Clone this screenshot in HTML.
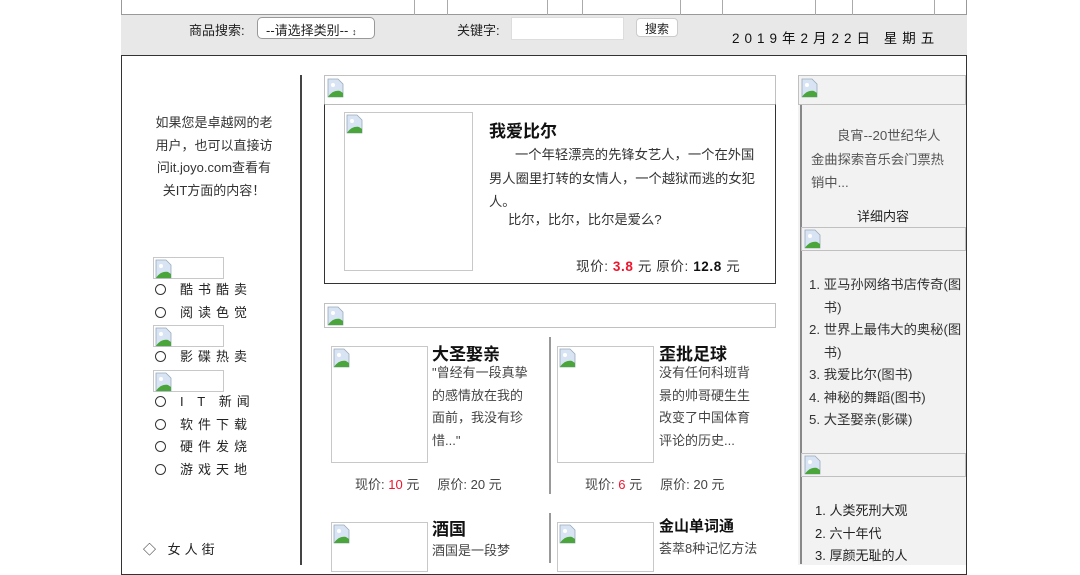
<!DOCTYPE html>
<html><head><meta charset="utf-8"><style>
*{margin:0;padding:0;box-sizing:border-box}
body{width:1080px;height:558px;overflow:hidden;background:#fff;font-family:"Liberation Sans","Noto Sans CJK SC",sans-serif;color:#333;font-size:13px;position:relative}
.a{position:absolute}
.img{position:absolute;border:1px solid #c8c8c8;background:#fff}
.img svg{position:absolute;left:1px;top:1px}
.bar{position:absolute;border:1px solid #c0c0c0;background:#fff}
.t{position:absolute;white-space:nowrap}
.red{color:#f0142d}
.rb{display:inline-block;width:11px;height:11px;border:1px solid #333;border-radius:50%;margin-right:14px;vertical-align:-1px}
</style></head><body>
<svg width="0" height="0" style="position:absolute"><defs><g id="bi"><path d="M1 1h10l5 5v13H1z" fill="#d8e4f4" stroke="#9ab" stroke-width=".8"/><path d="M1 19c3-5 8-7 12-6l3 2v4z" fill="#4aa53a"/><circle cx="6" cy="7" r="2" fill="#fff"/></g></defs></svg>

<div class="a" style="left:121px;top:0;width:846px;height:15px;border:1px solid #999;border-top:none;background:#fff"></div>
<div class="a" style="left:414px;top:0;width:1px;height:15px;background:#aaa"></div>
<div class="a" style="left:447px;top:0;width:1px;height:15px;background:#aaa"></div>
<div class="a" style="left:547px;top:0;width:1px;height:15px;background:#aaa"></div>
<div class="a" style="left:582px;top:0;width:1px;height:15px;background:#aaa"></div>
<div class="a" style="left:680px;top:0;width:1px;height:15px;background:#aaa"></div>
<div class="a" style="left:722px;top:0;width:1px;height:15px;background:#aaa"></div>
<div class="a" style="left:815px;top:0;width:1px;height:15px;background:#aaa"></div>
<div class="a" style="left:852px;top:0;width:1px;height:15px;background:#aaa"></div>
<div class="a" style="left:934px;top:0;width:1px;height:15px;background:#aaa"></div>
<div class="a" style="left:121px;top:15px;width:846px;height:40px;background:#e8e8e8"></div>
<div class="t" style="left:189px;top:20px;color:#222">商品搜索:</div>
<div class="a" style="left:257px;top:17px;width:118px;height:22px;border:1px solid #999;border-radius:5px;background:#fff;font-size:13px;padding:2px 0 0 8px;color:#222">--请选择类别-- <span style="font-size:9px">&#8597;</span></div>
<div class="t" style="left:457px;top:20px;color:#222">关键字:</div>
<div class="a" style="left:511px;top:17px;width:113px;height:23px;background:#fff;border:1px solid #ddd"></div>
<div class="a" style="left:636px;top:18px;width:42px;height:19px;background:#fff;border:1px solid #ccc;border-radius:4px;font-size:12px;text-align:center;padding-top:1px;color:#222">搜索</div>
<div class="t" style="left:732px;top:27px;color:#111;letter-spacing:5px;font-size:13.5px">2019年2月22日 星期五</div>

<div class="a" style="left:121px;top:55px;width:846px;height:520px;border:1px solid #333"></div>
<div class="a" style="left:300px;top:75px;width:2px;height:490px;background:#444"></div>

<div class="a" style="left:152px;top:112px;width:124px;font-size:13px;line-height:22.5px;text-align:center;color:#333">如果您是卓越网的老用户，也可以直接访问it.joyo.com查看有关IT方面的内容！</div>
<div class="img" style="left:153px;top:257px;width:71px;height:22px"><svg width="18" height="20"><use href="#bi"/></svg></div>
<div class="img" style="left:153px;top:325px;width:71px;height:22px"><svg width="18" height="20"><use href="#bi"/></svg></div>
<div class="img" style="left:153px;top:370px;width:71px;height:22px"><svg width="18" height="20"><use href="#bi"/></svg></div>
<div class="t" style="left:155px;top:279px;line-height:22.5px;color:#222;font-size:13px;letter-spacing:5px"><span class="rb"></span>酷书酷卖<br><span class="rb"></span>阅读色觉</div>
<div class="t" style="left:155px;top:346px;line-height:22.5px;color:#222;font-size:13px;letter-spacing:5px"><span class="rb"></span>影碟热卖</div>
<div class="t" style="left:155px;top:391px;line-height:22.5px;color:#222;font-size:13px;letter-spacing:5px"><span class="rb"></span>I&nbsp;T&nbsp;新闻<br><span class="rb"></span>软件下载<br><span class="rb"></span>硬件发烧<br><span class="rb"></span>游戏天地</div>
<div class="t" style="left:143px;top:539px;color:#222;letter-spacing:4px">◇&nbsp;女人街</div>

<div class="bar" style="left:324px;top:75px;width:452px;height:30px"><svg width="18" height="20" style="position:absolute;left:2px;top:2px"><use href="#bi"/></svg></div>
<div class="a" style="left:324px;top:104px;width:452px;height:180px;border:1px solid #333;border-top:1px solid #bbb"></div>
<div class="img" style="left:344px;top:112px;width:129px;height:159px"><svg width="18" height="20"><use href="#bi"/></svg></div>
<div class="t" style="left:489px;top:117px;font-size:17px;font-weight:bold;color:#111">我爱比尔</div>
<div class="a" style="left:489px;top:143px;width:272px;line-height:23.5px;font-size:13.3px;color:#333;text-indent:26px">一个年轻漂亮的先锋女艺人，一个在外国男人圈里打转的女情人，一个越狱而逃的女犯人。</div>
<div class="t" style="left:508px;top:208px;line-height:23px;font-size:13.3px">比尔，比尔，比尔是爱么?</div>
<div class="t" style="left:576px;top:255px;font-size:13.5px;letter-spacing:.6px">现价: <b class="red">3.8</b> 元 原价: <b style="color:#111">12.8</b> 元</div>

<div class="bar" style="left:324px;top:303px;width:452px;height:25px"><svg width="18" height="20" style="position:absolute;left:2px;top:2px"><use href="#bi"/></svg></div>
<div class="a" style="left:549px;top:337px;width:2px;height:157px;background:#999"></div>
<div class="a" style="left:549px;top:513px;width:2px;height:50px;background:#999"></div>

<div class="img" style="left:331px;top:346px;width:97px;height:117px"><svg width="18" height="20"><use href="#bi"/></svg></div>
<div class="t" style="left:432px;top:340px;font-size:17px;font-weight:bold;color:#111">大圣娶亲</div>
<div class="a" style="left:432px;top:362px;width:102px;line-height:22.5px;color:#444">"曾经有一段真挚的感情放在我的面前，我没有珍惜..."</div>
<div class="t" style="left:355px;top:474px;color:#444">现价: <span class="red">10</span> 元 &nbsp; &nbsp; 原价: 20 元</div>

<div class="img" style="left:557px;top:346px;width:97px;height:117px"><svg width="18" height="20"><use href="#bi"/></svg></div>
<div class="t" style="left:659px;top:340px;font-size:17px;font-weight:bold;color:#111">歪批足球</div>
<div class="a" style="left:659px;top:362px;width:96px;line-height:22.5px;color:#444">没有任何科班背景的帅哥硬生生改变了中国体育评论的历史...</div>
<div class="t" style="left:585px;top:474px;color:#444">现价: <span class="red">6</span> 元 &nbsp; &nbsp; 原价: 20 元</div>

<div class="img" style="left:331px;top:522px;width:97px;height:50px"><svg width="18" height="20"><use href="#bi"/></svg></div>
<div class="t" style="left:432px;top:515px;font-size:17px;font-weight:bold;color:#111">酒国</div>
<div class="t" style="left:432px;top:540px;color:#444">酒国是一段梦</div>
<div class="img" style="left:557px;top:522px;width:97px;height:50px"><svg width="18" height="20"><use href="#bi"/></svg></div>
<div class="t" style="left:659px;top:515px;font-size:15px;font-weight:bold;color:#111">金山单词通</div>
<div class="t" style="left:659px;top:538px;color:#444">荟萃8种记忆方法</div>

<div class="a" style="left:798px;top:75px;width:168px;height:490px;background:#f2f2f2"></div>
<div class="a" style="left:800px;top:104px;width:2px;height:460px;background:#888"></div>
<div class="bar" style="left:798px;top:75px;width:168px;height:30px;background:#f2f2f2"><svg width="18" height="20" style="position:absolute;left:2px;top:2px"><use href="#bi"/></svg></div>
<div class="a" style="left:811px;top:124px;width:142px;line-height:23.5px;color:#555;text-indent:26px;font-size:13.3px">良宵--20世纪华人金曲探索音乐会门票热销中...</div>
<div class="t" style="left:857px;top:206px;color:#222">详细内容</div>
<div class="bar" style="left:801px;top:227px;width:165px;height:24px;background:#f2f2f2"><svg width="18" height="20" style="position:absolute;left:2px;top:1px"><use href="#bi"/></svg></div>
<div class="a" style="left:809px;top:274px;width:160px;line-height:22.5px;color:#333;font-size:13.3px">1. 亚马孙网络书店传奇(图<br>&nbsp; &nbsp; 书)<br>2. 世界上最伟大的奥秘(图<br>&nbsp; &nbsp; 书)<br>3. 我爱比尔(图书)<br>4. 神秘的舞蹈(图书)<br>5. 大圣娶亲(影碟)</div>
<div class="bar" style="left:801px;top:453px;width:165px;height:24px;background:#f2f2f2"><svg width="18" height="20" style="position:absolute;left:2px;top:1px"><use href="#bi"/></svg></div>
<div class="a" style="left:815px;top:500px;width:150px;line-height:22.5px;color:#222">1. 人类死刑大观<br>2. 六十年代<br>3. 厚颜无耻的人</div>
</body></html>
